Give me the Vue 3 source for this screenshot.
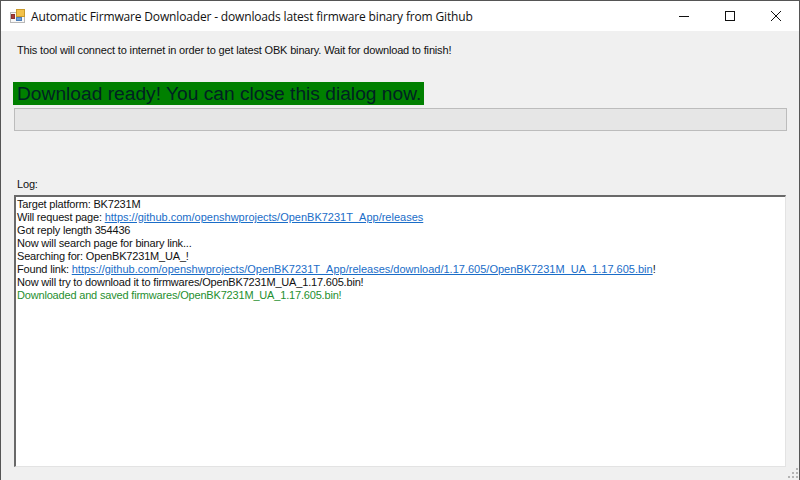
<template>
  <div class="window">
    <div class="titlebar">
      <svg class="app-icon" width="16" height="16" viewBox="0 0 16 16">
        <rect x="0.5" y="4.5" width="14" height="10" fill="#f8f8f8" stroke="#b8b8b8" />
        <rect x="6.5" y="1.5" width="8" height="7" fill="#f2c14a" stroke="#c99a2c" />
        <rect x="1.5" y="6.5" width="3" height="4" fill="#a83a3a" stroke="#8a3030" />
        <rect x="6.5" y="9.5" width="5" height="3" fill="#6f9fd8" stroke="#4f7fb8" />
      </svg>
      <span class="title">{{ title }}</span>
      <div class="controls">
        <svg width="46" height="30" viewBox="0 0 46 30"><path d="M18 15.5h10" stroke="#111" fill="none" /></svg>
        <svg width="46" height="30" viewBox="0 0 46 30"><rect x="18.5" y="10.5" width="9" height="9" stroke="#111" fill="none" /></svg>
        <svg width="46" height="30" viewBox="0 0 46 30"><path d="M18 10l10 10M28 10l-10 10" stroke="#111" fill="none" /></svg>
      </div>
    </div>
    <div class="content">
      <p class="intro">This tool will connect to internet in order to get latest OBK binary. Wait for download to finish!</p>
      <div class="banner">Download ready! You can close this dialog now.</div>
      <div class="progress"></div>
      <label class="log-label">Log:</label>
      <div class="log">
        <div>Target platform: BK7231M</div>
        <div>Will request page: <a>https://github.com/openshwprojects/OpenBK7231T_App/releases</a></div>
        <div>Got reply length 354436</div>
        <div>Now will search page for binary link...</div>
        <div>Searching for: OpenBK7231M_UA_!</div>
        <div>Found link: <a>https://github.com/openshwprojects/OpenBK7231T_App/releases/download/1.17.605/OpenBK7231M_UA_1.17.605.bin</a>!</div>
        <div>Now will try to download it to firmwares/OpenBK7231M_UA_1.17.605.bin!</div>
        <div class="done">Downloaded and saved firmwares/OpenBK7231M_UA_1.17.605.bin!</div>
      </div>
    </div>
    <svg class="grip" width="10" height="10" viewBox="0 0 10 10">
      <path d="M8 0h2v2H8zM4 4h2v2H4zM8 4h2v2H8zM0 8h2v2H0zM4 8h2v2H4zM8 8h2v2H8z" fill="#b4b4b4" />
    </svg>
  </div>
</template>

<script setup>
const title = 'Automatic Firmware Downloader - downloads latest firmware binary from Github'
</script>

<style>
html, body {
  margin: 0;
  background: #f0f0f0;
}
</style>

<style scoped>
.window {
  position: relative;
  width: 800px;
  height: 480px;
  box-sizing: border-box;
  display: flex;
  flex-direction: column;
  overflow: hidden;
  background: #f0f0f0;
  border: 1px solid #555;
  border-bottom: none;
  font-family: "Liberation Sans", Arial, sans-serif;
  font-size: 11px;
  color: #111;
}

.titlebar {
  height: 30px;
  flex: none;
  display: flex;
  align-items: center;
  background: #fff;
  padding-left: 9px;
}

.app-icon {
  flex: none;
}

.title {
  margin-left: 5px;
  font-size: 12px;
  letter-spacing: -0.16px;
  font-family: "Open Sans", sans-serif;
}

.controls {
  margin-left: auto;
  display: flex;
}

.content {
  flex: 1;
  display: flex;
  flex-direction: column;
  padding: 0 12px 13px 12px;
  min-height: 0;
}

.intro {
  margin: 13px 0 0 4px;
  line-height: 13px;
  letter-spacing: -0.16px;
}

.banner {
  align-self: flex-start;
  margin-top: 25px;
  height: 23px;
  line-height: 24px;
  padding: 0 3px 0 4px;
  background: #008000;
  font-size: 19.2px;
  color: #022;
}

.progress {
  margin-top: 3px;
  margin-left: 1px;
  height: 23px;
  box-sizing: border-box;
  background: #e6e6e6;
  border: 1px solid #bcbcbc;
}

.log-label {
  margin: 47px 0 0 4px;
  line-height: 13px;
  letter-spacing: -0.16px;
}

.log {
  flex: 1;
  margin: 4px 1px 0 1px;
  box-sizing: border-box;
  background: #fff;
  border-top: 2px solid #696969;
  border-left: 2px solid #696969;
  border-right: 1px solid #e3e3e3;
  border-bottom: 1px solid #e3e3e3;
  padding: 1px 0 0 1px;
  line-height: 13px;
  letter-spacing: -0.18px;
}

.log a {
  color: #1a6dc8;
  text-decoration: underline;
  letter-spacing: 0;
}

.done {
  color: #1f8f2f;
}

.grip {
  position: absolute;
  right: 1px;
  bottom: 2px;
}
</style>
